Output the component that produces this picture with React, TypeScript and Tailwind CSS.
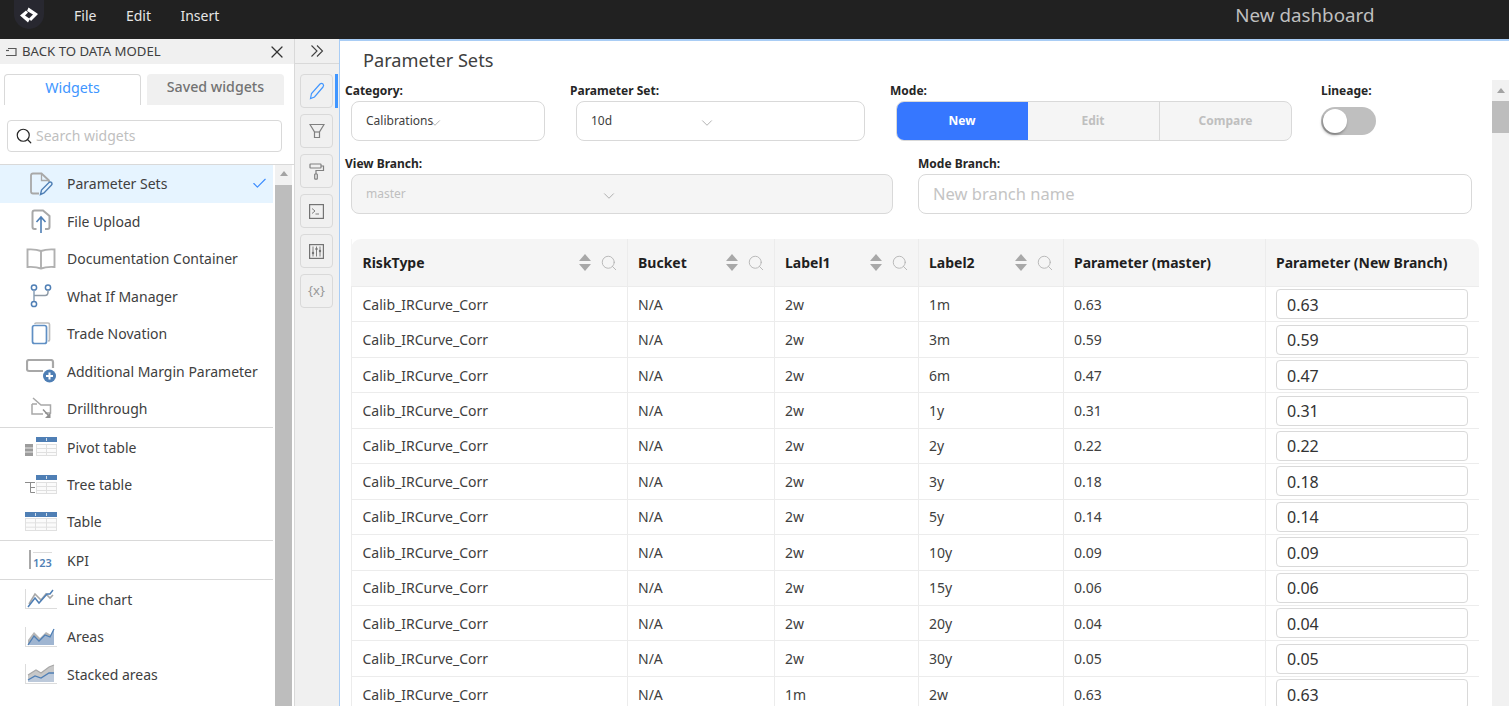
import React from "react";
import { Check, ChevronDown, Search, X } from "lucide-react";

const G = "#a8a8a8";
const B = "#4f7fb5";

const Logo = () => (
  <svg width="20" height="16" viewBox="0 0 20 16">
    <path d="M9.5 0.5 L19 7 L12 14 L10 11.5 L14 7.5 L8 4 Z" fill="#fff" />
    <path d="M1 8.5 L7 3.5 L9 5.5 L6 8.5 L11 12 L9 15.5 Z" fill="#fff" />
  </svg>
);

const BackIcon = () => (
  <svg width="12" height="10" viewBox="0 0 12 10" fill="none" stroke="#595959" strokeWidth="1.2">
    <path d="M3 1.5 H11 V8.5 H1" />
    <path d="M1 3.5 H4" />
  </svg>
);

const DoubleChevron = () => (
  <svg width="14" height="14" viewBox="0 0 14 14" fill="none" stroke="#404040" strokeWidth="1.1">
    <path d="M1.5 1.5 L7 7 L1.5 12.5" />
    <path d="M7 1.5 L12.5 7 L7 12.5" />
  </svg>
);

const GridCells = ({ x, y, w, h, cols }: { x: number; y: number; w: number; h: number; cols: number[] }) => (
  <g fill="none" stroke="#e0e0e0">
    <rect x={x + 0.5} y={y + 0.5} width={w - 1} height={h - 1} fill="#fbfbfb" />
    <path d={`M${x} ${y + h / 3 + 0.5} H${x + w} M${x} ${y + (2 * h) / 3 + 0.5} H${x + w}`} />
    {cols.map((c) => (
      <path key={c} d={`M${c} ${y} V${y + h}`} />
    ))}
  </g>
);

const icons: Record<string, React.ReactNode> = {
  params: (
    <svg width="24" height="24" viewBox="0 0 24 24" fill="none">
      <path d="M10 21.5 H4 Q2 21.5 2 19.5 V3.5 Q2 1.5 4 1.5 H12.5 L20 8.5 V10" stroke={G} strokeWidth="1.8" />
      <path d="M12.5 1.5 V8.5 H19" stroke={G} strokeWidth="1.3" />
      <path d="M11.5 22.5 L12.5 18 L20 10.5 Q21.5 9.5 22.5 10.5 Q23.5 12 22.5 13 L15 21 Z" stroke={B} strokeWidth="1.4" fill="#e6f4ff" />
    </svg>
  ),
  upload: (
    <svg width="20" height="24" viewBox="0 0 20 24" fill="none">
      <path d="M5.5 20 H3.5 Q1.5 20 1.5 18 V3.5 Q1.5 1.5 3.5 1.5 H12 L18.5 7 V18 Q18.5 20 16.5 20 H14" stroke={G} strokeWidth="2" />
      <path d="M10 24 V8 M5.5 13 L10 8 L14.5 13" stroke={B} strokeWidth="1.6" />
    </svg>
  ),
  book: (
    <svg width="30" height="22" viewBox="0 0 30 22" fill="none" stroke="#b0b0b0" strokeWidth="1.9">
      <path d="M15 3 Q10 1 1.5 1.5 V19 Q10 18.5 15 20.5 Q20 18.5 28.5 19 V1.5 Q20 1 15 3 Z" />
      <path d="M15 3 V20.5" />
    </svg>
  ),
  branch: (
    <svg width="22" height="24" viewBox="0 0 22 24" fill="none" stroke={B} strokeWidth="1.5">
      <circle cx="4" cy="3.5" r="2.6" />
      <circle cx="18" cy="3.5" r="2.6" />
      <circle cx="4" cy="20" r="2.6" />
      <path d="M4 6.5 V17" stroke="#8aa0b8" />
      <path d="M18 6.5 V8 Q18 11.5 15 11.5 H4" stroke="#8f9aa6" />
    </svg>
  ),
  copy: (
    <svg width="20" height="23" viewBox="0 0 20 23" fill="none">
      <path d="M4 2 Q4 1 5 1 H17 Q18.5 1 18.5 2.5 V18 Q18.5 19 17 19" stroke="#bdbdbd" strokeWidth="1.7" />
      <rect x="1.5" y="3.5" width="14" height="18" rx="2" fill="#fff" stroke="#5f8fc4" strokeWidth="1.7" />
    </svg>
  ),
  margin: (
    <svg width="30" height="24" viewBox="0 0 30 24" fill="none">
      <path d="M17 12 H3 Q1 12 1 10 V3 Q1 1 3 1 H25 Q27 1 27 3 V9" stroke={G} strokeWidth="2.2" />
      <circle cx="23.5" cy="17" r="6.5" fill={B} />
      <path d="M23.5 13.5 V20.5 M20 17 H27" stroke="#fff" strokeWidth="2" />
    </svg>
  ),
  drill: (
    <svg width="22" height="22" viewBox="0 0 22 22" fill="none" stroke={G} strokeWidth="1.5">
      <path d="M3 1 L11 8 H20.5 V16 H15 M11 8" />
      <path d="M2 7 V17 H13 M2 7 H7" />
      <path d="M13 12.5 L19 19" stroke="#8f8f8f" />
      <path d="M20.5 15.5 V21 H15 Z" fill="#8f8f8f" stroke="none" />
    </svg>
  ),
  pivot: (
    <svg width="32" height="20" viewBox="0 0 32 20">
      <rect x="11" y="0" width="21" height="5" fill={B} />
      <path d="M21.5 1 V4" stroke="#d5dfeb" />
      <rect x="0" y="7" width="8" height="12" fill="#9c9c9c" />
      <path d="M0 11 H8 M0 15 H8" stroke="#e6e6e6" />
      <GridCells x={11} y={7} w={21} h={12} cols={[21.5]} />
    </svg>
  ),
  tree: (
    <svg width="32" height="20" viewBox="0 0 32 20">
      <rect x="11" y="0" width="21" height="5" fill={B} />
      <path d="M21.5 1 V4" stroke="#d5dfeb" />
      <GridCells x={11} y={7} w={21} h={12} cols={[21.5]} />
      <path d="M0 7.5 H10 M5.5 7.5 V17.5 H10 M5.5 12.5 H10" stroke="#8c8c8c" fill="none" />
    </svg>
  ),
  table: (
    <svg width="32" height="19" viewBox="0 0 32 19">
      <rect x="0" y="0" width="32" height="5" fill={B} />
      <path d="M10.5 1 V4 M21.5 1 V4" stroke="#d5dfeb" />
      <GridCells x={0} y={6} w={32} h={13} cols={[10.5, 21.5]} />
    </svg>
  ),
  kpi: (
    <svg width="26" height="20" viewBox="0 0 26 20">
      <rect x="1" y="0" width="2" height="19" fill={G} />
      <path d="M5 2.5 H24" stroke="#dcdcdc" />
      <text x="5" y="17" fontSize="11" fontWeight="600" fontFamily="'Noto Sans', sans-serif" fill={B}>123</text>
    </svg>
  ),
  line: (
    <svg width="32" height="20" viewBox="0 0 32 20" fill="none">
      <path d="M0.5 0 V19 M0 19.5 H32" stroke="#dcdcdc" />
      <path d="M4 15 L10 5 L16 11 L21 5 L25 9 L28 6" stroke={G} strokeWidth="1.6" />
      <path d="M3 18 L10 9 L14 14 L22 5 L25 5 L28 1" stroke={B} strokeWidth="1.5" />
    </svg>
  ),
  areas: (
    <svg width="32" height="20" viewBox="0 0 32 20" fill="none">
      <path d="M0.5 0 V19 M0 19.5 H32" stroke="#dcdcdc" />
      <path d="M3 18 V13 L9 5 L15 11 L21 5 L26 8 L29 4 V18 Z" fill="#b5b5b5" />
      <path d="M3 18 L9 9 L14 14 L20 8 L25 10 L29 2 V18 Z" fill="#9fb5d1" />
      <path d="M3 18 L9 9 L14 14 L20 8 L25 10 L29 2" stroke={B} strokeWidth="1.3" />
    </svg>
  ),
  stacked: (
    <svg width="32" height="20" viewBox="0 0 32 20" fill="none">
      <path d="M0.5 0 V19 M0 19.5 H32" stroke="#dcdcdc" />
      <path d="M3 18 V11 L11 6 L16 9 L24 3 L29 1 V18 Z" fill="#c8c8c8" />
      <path d="M3 18 V16 L10 12 L16 14 L24 9 L29 9 V18 Z" fill="#bcc9da" />
      <path d="M3 16 L10 12 L16 14 L24 9 L29 9" stroke={B} strokeWidth="1.3" />
      <path d="M3 11 L11 6 L16 9 L24 3 L29 1" stroke={G} strokeWidth="1.2" />
    </svg>
  ),
};

type Widget = { name: string; icon: string; active?: boolean; divider?: boolean };

const widgets: Widget[] = [
  { name: "Parameter Sets", icon: "params", active: true },
  { name: "File Upload", icon: "upload" },
  { name: "Documentation Container", icon: "book" },
  { name: "What If Manager", icon: "branch" },
  { name: "Trade Novation", icon: "copy" },
  { name: "Additional Margin Parameter", icon: "margin" },
  { name: "Drillthrough", icon: "drill", divider: true },
  { name: "Pivot table", icon: "pivot" },
  { name: "Tree table", icon: "tree" },
  { name: "Table", icon: "table", divider: true },
  { name: "KPI", icon: "kpi", divider: true },
  { name: "Line chart", icon: "line" },
  { name: "Areas", icon: "areas" },
  { name: "Stacked areas", icon: "stacked" },
];

const rows = [
  ["2w", "1m", "0.63"],
  ["2w", "3m", "0.59"],
  ["2w", "6m", "0.47"],
  ["2w", "1y", "0.31"],
  ["2w", "2y", "0.22"],
  ["2w", "3y", "0.18"],
  ["2w", "5y", "0.14"],
  ["2w", "10y", "0.09"],
  ["2w", "15y", "0.06"],
  ["2w", "20y", "0.04"],
  ["2w", "30y", "0.05"],
  ["1m", "2w", "0.63"],
];

const tools: React.ReactNode[] = [
  <svg key="pen" width="16" height="18" viewBox="0 0 16 18" fill="none" stroke="#4096ff" strokeWidth="1.2">
    <path d="M1.5 16.5 L2.5 11.5 L11 2 Q12.5 0.8 14 2 Q15.2 3.5 14 5 L5.5 15 Z" />
  </svg>,
  <svg key="filter" width="16" height="16" viewBox="0 0 16 16" fill="none" stroke="#808080" strokeWidth="1.2">
    <path d="M1 1.5 H15 L10.5 9 V14.5 H5.5 V9 Z" />
    <path d="M5.5 9 H10.5" />
  </svg>,
  <svg key="paint" width="16" height="17" viewBox="0 0 16 17" fill="none" stroke="#808080" strokeWidth="1.2">
    <rect x="1" y="1" width="11" height="4" rx="0.5" />
    <path d="M12 3 H14.5 V7.5 H7 V11" />
    <rect x="5.7" y="11" width="2.6" height="5.2" rx="0.6" />
  </svg>,
  <svg key="term" width="15" height="15" viewBox="0 0 15 15" fill="none" stroke="#737373" strokeWidth="1.2">
    <rect x="0.6" y="0.6" width="13.8" height="13.8" />
    <path d="M3 4.5 L6 7 L3 9.5" strokeWidth="0.9" />
    <path d="M6.5 10 H10" strokeWidth="0.9" />
  </svg>,
  <svg key="sliders" width="15" height="15" viewBox="0 0 15 15" fill="none" stroke="#737373" strokeWidth="1.2">
    <rect x="0.6" y="0.6" width="13.8" height="13.8" />
    <path d="M4 2.5 V12.5 M7.5 2.5 V12.5 M11 2.5 V12.5" strokeWidth="0.9" />
    <circle cx="4" cy="9" r="1.2" fill="#737373" strokeWidth="0" />
    <circle cx="7.5" cy="5" r="1.2" fill="#737373" strokeWidth="0" />
    <circle cx="11" cy="7" r="1.2" fill="#737373" strokeWidth="0" />
  </svg>,
  <span key="x" className="text-[13px] text-[#999]">{"{x}"}</span>,
];

const Scrollbar = ({ arrowClass, thumbClass }: { arrowClass: string; thumbClass: string }) => (
  <div className="flex w-[17px] shrink-0 flex-col bg-[#f1f1f1]">
    <div className={`flex items-center justify-center ${arrowClass}`}>
      <div className="h-0 w-0 border-x-[4.5px] border-b-[5px] border-x-transparent border-b-[#a3a3a3]" />
    </div>
    <div className={`bg-[#bdbdbd] ${thumbClass}`} />
  </div>
);

const SortIcon = () => (
  <div className="flex flex-col items-center gap-[3px]">
    <div className="h-0 w-0 border-x-[6px] border-b-[7px] border-x-transparent border-b-[#a8a8a8]" />
    <div className="h-0 w-0 border-x-[6px] border-t-[7px] border-x-transparent border-t-[#a8a8a8]" />
  </div>
);

const HeaderCell = ({ label, className, filter = true }: { label: string; className: string; filter?: boolean }) => (
  <div className={`flex items-center border-r border-[#ececec] pr-[10px] ${className}`}>
    <span className="flex-1 font-bold text-[#1f1f1f]">{label}</span>
    {filter && (
      <div className="-mr-px flex items-center gap-[9px]">
        <SortIcon />
        <Search size={18} strokeWidth={1.2} className="text-[#b3b3b3]" />
      </div>
    )}
  </div>
);

const FieldLabel = ({ children, className }: { children: React.ReactNode; className?: string }) => (
  <div className={`h-[18px] text-[12px] leading-[20px] font-bold text-[#262626] ${className ?? ""}`}>{children}</div>
);

const Field = ({ label, className, children }: { label: string; className?: string; children: React.ReactNode }) => (
  <div className={className}>
    <FieldLabel className="-ml-1.5 mb-[2px]">{label}</FieldLabel>
    {children}
  </div>
);

const SelectBox = ({ value, chevronClass, disabled }: { value: string; chevronClass: string; disabled?: boolean }) => (
  <div
    className={`flex h-10 items-center rounded-lg border border-[#d9d9d9] pl-[14px] text-[12px] ${
      disabled ? "bg-[#f5f5f5] text-[#bfbfbf]" : "bg-white text-[#404040]"
    }`}
  >
    <span>{value}</span>
    <ChevronDown size={18} strokeWidth={0.9} className={`mt-1 text-[#8c8c8c] ${chevronClass}`} />
  </div>
);

export default function App() {
  return (
    <div className="flex h-[706px] flex-col overflow-hidden bg-white font-['Noto_Sans','Open_Sans',sans-serif] text-[14px] text-[#333]">
      {/* top bar */}
      <header className="flex h-[39px] shrink-0 items-start bg-[#212121] text-[14px] text-[#e6e6e6]">
        <div className="ml-[14px] flex h-[29px] w-[30px] items-center justify-center rounded-b-full bg-[#282830]">
          <Logo />
        </div>
        <nav className="ml-[30px] flex h-[30px] items-center gap-[29.5px]">
          <span>File</span>
          <span>Edit</span>
          <span>Insert</span>
        </nav>
        <div className="ml-[1016px] flex h-[30px] items-center text-[18.8px] text-[#bfbfbf]">New dashboard</div>
      </header>

      <div className="flex min-h-0 flex-1">
        {/* widgets panel */}
        <aside className="flex w-[295px] shrink-0 flex-col border-r border-[#d9d9d9]">
          <div className="flex h-[25px] shrink-0 items-center bg-[#f0f0f0] pl-[5px] pr-[7px] text-[13.2px] text-[#404040]">
            <BackIcon />
            <span className="ml-[5px] flex-1">BACK TO DATA MODEL</span>
            <X size={20} strokeWidth={1.5} className="text-[#333]" />
          </div>
          <div className="mt-[10px] flex h-[31px] shrink-0 gap-[6px] pl-1 pr-[10px]">
            <div className="flex w-[137px] items-center justify-center rounded-t border border-b-0 border-[#d9d9d9] pb-1 text-[14.3px] text-[#4096ff]">Widgets</div>
            <div className="flex w-[137px] items-center justify-center rounded-t bg-[#f0f0f0] pb-1.5 text-[14.2px] font-medium text-[#737373]">Saved widgets</div>
          </div>
          <div className="ml-[7px] mr-3 mt-[15px] flex h-8 shrink-0 items-center rounded-sm border border-[#d9d9d9] pb-0.5 pl-[7px] text-[#bfbfbf]">
            <Search size={18} strokeWidth={1.6} className="mt-0.5 text-[#262626]" />
            <span className="ml-[3px]">Search widgets</span>
          </div>
          <div className="mt-3 flex min-h-0 flex-1 border-t border-[#d9d9d9] pr-0.5">
            <ul className="min-w-0 flex-1">
              {widgets.map((w) => (
                <li
                  key={w.name}
                  className={`flex h-[37.5px] items-center ${w.active ? "bg-[#e6f4ff]" : ""} ${w.divider ? "mb-px border-b border-[#d9d9d9]" : ""}`}
                >
                  <div className="flex w-[67px] shrink-0 justify-center pl-[15px]">{icons[w.icon]}</div>
                  <span className="flex-1 text-[#404040]">{w.name}</span>
                  {w.active && <Check size={17} strokeWidth={1.6} className="mr-[5px] text-[#3b8cff]" />}
                </li>
              ))}
            </ul>
            <div className="ml-0.5 flex">
              <Scrollbar arrowClass="h-[17px]" thumbClass="flex-1 mt-[3px]" />
            </div>
          </div>
        </aside>

        {/* tool strip */}
        <div className="flex w-[44px] shrink-0 flex-col bg-[#f0f0f0]">
          <div className="flex h-[25px] items-center justify-center border-b border-[#d9d9d9] pr-px">
            <DoubleChevron />
          </div>
          <div className="mt-[10px] flex flex-col gap-[6px] pl-[5px]">
            {tools.map((t, i) => (
              <div key={i} className="relative flex h-[34px] w-[33px] items-center justify-center rounded border border-[#d9d9d9]">
                {t}
                {i === 0 && <div className="absolute -right-[6px] -top-px h-[34px] w-[3px] bg-[#4096ff]" />}
              </div>
            ))}
          </div>
        </div>

        {/* main */}
        <main className="flex min-w-0 flex-1 flex-col border-l border-t-2 border-[#a9cdf5]">
          <h1 className="ml-[23px] flex h-[39px] shrink-0 items-center pt-px text-[18.2px] text-[#404040]">Parameter Sets</h1>
          <div className="flex min-h-0 flex-1">
            <div className="min-w-0 flex-1 overflow-hidden pl-[11px] pt-px">
              <div className="flex">
                <Field label="Category:" className="w-[194px]">
                  <SelectBox value="Calibrations" chevronClass="-ml-[7px]" />
                </Field>
                <Field label="Parameter Set:" className="ml-[31px] w-[289px]">
                  <SelectBox value="10d" chevronClass="ml-[86px]" />
                </Field>
                <Field label="Mode:" className="ml-[31px] w-[396px]">
                  <div className="flex h-10 overflow-hidden rounded-lg border border-[#d9d9d9] bg-[#f5f5f5] text-[12px] font-bold text-[#bfbfbf]">
                    <div className="-m-px flex w-[132px] items-center justify-center bg-[#3677ff] text-white">New</div>
                    <div className="flex w-[133px] items-center justify-center border-r border-[#d9d9d9]">Edit</div>
                    <div className="flex flex-1 items-center justify-center">Compare</div>
                  </div>
                </Field>
                <div className="ml-[29px]">
                  <FieldLabel className="mb-2">Lineage:</FieldLabel>
                  <div className="flex h-7 w-[55px] items-center rounded-full bg-[#bfbfbf] pl-0.5">
                    <div className="h-6 w-6 rounded-full bg-white shadow-[-1px_2px_3px_rgba(0,0,0,0.35)]" />
                  </div>
                </div>
              </div>

              <div className="mt-[13px] flex">
                <Field label="View Branch:" className="w-[542px]">
                  <SelectBox value="master" chevronClass="ml-[194px]" disabled />
                </Field>
                <div className="ml-[25px] w-[554px]">
                  <FieldLabel className="mb-[2px]">Mode Branch:</FieldLabel>
                  <div className="flex h-10 items-center rounded-lg border border-[#d9d9d9] pl-[14px] text-[16.5px] text-[#c4c4c4]">New branch name</div>
                </div>
              </div>

              {/* table */}
              <div className="mt-[25px] w-[1128px] rounded-t-[10px] text-[#404040]">
                <div className="flex h-12 rounded-t-[10px] border-b border-[#ececec] bg-[#f5f5f5]">
                  <HeaderCell label="RiskType" className="w-[277px] border-l border-l-[#f5f5f5] pl-[10.5px]" />
                  <HeaderCell label="Bucket" className="w-[147px] pl-[10px]" />
                  <HeaderCell label="Label1" className="w-[144px] pl-[10px]" />
                  <HeaderCell label="Label2" className="w-[145px] pl-[10px]" />
                  <HeaderCell label="Parameter (master)" className="w-[202px] pl-[10px]" filter={false} />
                  <HeaderCell label="Parameter (New Branch)" className="flex-1 border-r-0 pl-[10px]" filter={false} />
                </div>
                {rows.map((r, i) => (
                  <div key={i} className="flex h-[35.45px] border-b border-[#ececec]">
                    <div className="flex w-[277px] items-center border-x border-[#ececec] pl-[10.5px]">Calib_IRCurve_Corr</div>
                    <div className="flex w-[147px] items-center border-r border-[#ececec] pl-[10px]">N/A</div>
                    <div className="flex w-[144px] items-center border-r border-[#ececec] pl-[10px]">{r[0]}</div>
                    <div className="flex w-[145px] items-center border-r border-[#ececec] pl-[10px]">{r[1]}</div>
                    <div className="flex w-[202px] items-center border-r border-[#ececec] pl-[10px]">{r[2]}</div>
                    <div className="flex flex-1 items-center pl-[10px]">
                      <div className="flex h-[30px] w-[192px] items-center rounded border border-[#d9d9d9] bg-white pl-[10px] pt-px text-[16px] text-[#333]">{r[2]}</div>
                    </div>
                  </div>
                ))}
              </div>
            </div>
            <Scrollbar arrowClass="h-[21px]" thumbClass="h-[32px]" />
          </div>
        </main>
      </div>
    </div>
  );
}
